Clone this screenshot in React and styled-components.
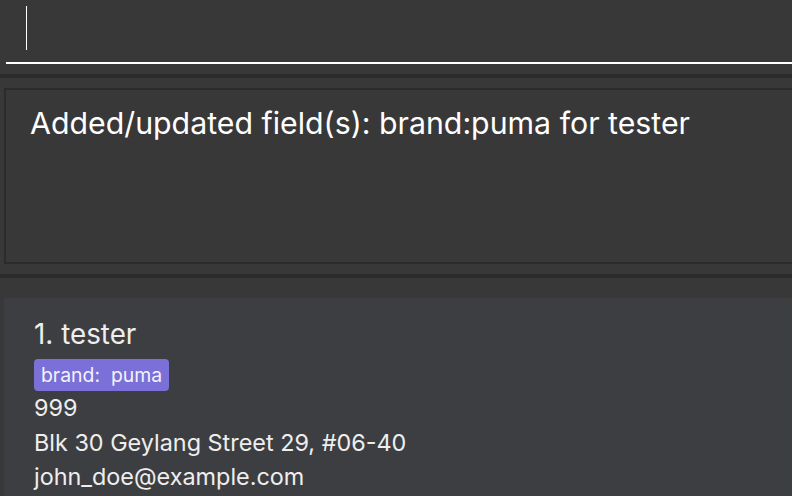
import React from "react";
import styled, { createGlobalStyle } from "styled-components";

const Global = createGlobalStyle`
  html, body {
    margin: 0;
    padding: 0;
    background: #383838;
    overflow: hidden;
  }
  body {
    font-family: Inter, "Noto Sans", "Liberation Sans", sans-serif;
    -webkit-font-smoothing: antialiased;
  }
`;

const Page = styled.div`
  width: 812px;
  height: 496px;
  display: flex;
  flex-direction: column;
  background: #383838;
`;

const CommandBox = styled.div`
  height: 74px;
  box-sizing: border-box;
  padding: 6px 0 0 6px;
  display: flex;
  flex-direction: column;
`;

const CommandInput = styled.div`
  height: 58px;
  box-sizing: border-box;
  border-bottom: 2px solid #ffffff;
  padding-left: 20px;
`;

const Caret = styled.span`
  display: block;
  width: 1px;
  height: 44px;
  background: #ffffff;
`;

const Separator = styled.div`
  height: 4px;
  background: #2b2b2b;
  flex: none;
`;

const ResultSection = styled.div`
  height: 196px;
  box-sizing: border-box;
  padding: 10px 0 10px 4px;
  display: flex;
`;

const ResultBox = styled.div`
  flex: 1;
  box-sizing: border-box;
  border: 2px solid #2b2b2b;
  padding: 15px 24px;
  color: #ffffff;
  font-size: 30.3px;
  line-height: 36px;
`;

const ListSection = styled.div`
  flex: 1;
  padding: 20px 0 0 4px;
  display: flex;
  flex-direction: column;
`;

const Card = styled.div`
  flex: 1;
  background: #3d3e41;
  padding: 18px 30px 0;
  color: #eeeeee;
  display: flex;
  flex-direction: column;
  align-items: flex-start;
`;

const Name = styled.div`
  font-size: 27.8px;
  line-height: 36px;
`;

const Tags = styled.div`
  display: flex;
  gap: 6px;
  margin: 7px 0 0;
`;

const Tag = styled.span`
  background: #7a70d7;
  color: #f4f2ff;
  border-radius: 4px;
  font-size: 19.4px;
  line-height: 32px;
  height: 32px;
  padding: 0 7px;
  white-space: pre;
`;

const Field = styled.div`
  font-size: 23.4px;
  line-height: 34.5px;
`;

export default function App() {
  return (
    <>
      <Global />
      <Page>
        <CommandBox>
          <CommandInput>
            <Caret />
          </CommandInput>
        </CommandBox>
        <Separator />
        <ResultSection>
          <ResultBox>Added/updated field(s): brand:puma for tester</ResultBox>
        </ResultSection>
        <Separator />
        <ListSection>
          <Card>
            <Name>1. tester</Name>
            <Tags>
              <Tag>{"brand:  puma"}</Tag>
            </Tags>
            <Field>999</Field>
            <Field>Blk 30 Geylang Street 29, #06-40</Field>
            <Field>john_doe@example.com</Field>
          </Card>
        </ListSection>
      </Page>
    </>
  );
}
